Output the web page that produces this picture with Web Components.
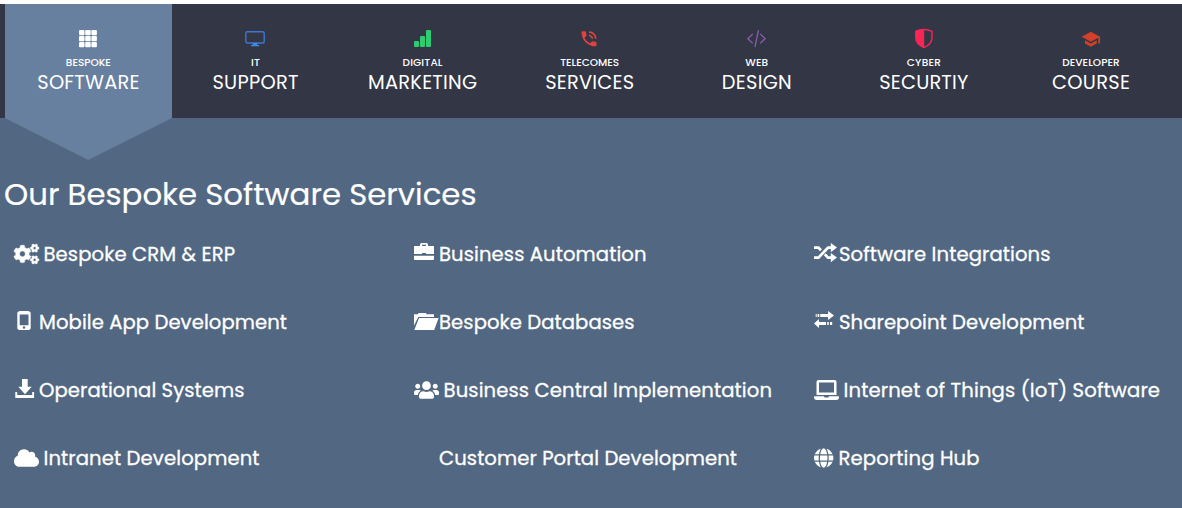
<!DOCTYPE html>
<html lang="en"><head><meta charset="utf-8"><title>Bespoke Software Services</title>
<style>
html,body{margin:0;height:100%;overflow:hidden;background:#fff}
body{font-family:Poppins,Inter,"Open Sans",sans-serif;color:#fff}
</style></head><body>
<services-page></services-page>
<script>
const FA = (d, vw = 640) => `<svg width="${vw / 25.6}" height="20" viewBox="0 0 ${vw} 512">${d}</svg>`;
const PX = d => `<svg width="25" height="20" viewBox="0 0 25 20">${d}</svg>`;
const NV = (d, v = '0 0 20 20') => `<svg width="20" height="20" viewBox="${v}">${d}</svg>`;
const smallCog = '<path d="M512.1 191l-8.2 14.3c-3 5.3-9.4 7.5-15.1 5.4-11.8-4.4-22.6-10.7-32.1-18.6-4.6-3.8-5.8-10.5-2.8-15.7l8.2-14.3c-6.9-8-12.3-17.3-15.9-27.4h-16.5c-6 0-11.2-4.3-12.2-10.3-2-12-2.1-24.6 0-37.1 1-6 6.2-10.4 12.2-10.4h16.5c3.6-10.1 9-19.4 15.9-27.4l-8.2-14.3c-3-5.2-1.9-11.9 2.8-15.7 9.5-7.9 20.4-14.2 32.1-18.6 5.7-2.1 12.1.1 15.1 5.4l8.2 14.3c10.5-1.9 21.2-1.9 31.7 0L552 6.3c3-5.3 9.4-7.5 15.1-5.4 11.8 4.4 22.6 10.7 32.1 18.6 4.6 3.8 5.8 10.5 2.8 15.7l-8.2 14.3c6.9 8 12.3 17.3 15.9 27.4h16.5c6 0 11.2 4.3 12.2 10.3 2 12 2.1 24.6 0 37.1-1 6-6.2 10.4-12.2 10.4h-16.5c-3.6 10.1-9 19.4-15.9 27.4l8.2 14.3c3 5.2 1.9 11.9-2.8 15.7-9.5 7.9-20.4 14.2-32.1 18.6-5.7 2.1-12.1-.1-15.1-5.4l-8.2-14.3c-10.4 1.9-21.2 1.9-31.7 0zm-10.5-58.8c38.5 29.6 82.4-14.3 52.8-52.8-38.5-29.7-82.4 14.3-52.8 52.8z"/>';
const icons = {
  cogs: FA('<g stroke="#fff" stroke-width="10">' + smallCog + '<g transform="translate(0 300)">' + smallCog + '</g><path d="M386.3 286.1l33.7 16.8c10.1 5.8 14.5 18.1 10.5 29.1-8.9 24.2-26.4 46.4-42.6 65.8-7.4 8.9-20.2 11.1-30.3 5.3l-29.1-16.8c-16 13.7-34.6 24.6-54.9 31.7v33.6c0 11.6-8.3 21.6-19.7 23.6-24.6 4.2-50.4 4.4-75.9 0-11.5-2-20-11.9-20-23.6V418c-20.3-7.2-38.9-18-54.9-31.7L74 403c-10 5.8-22.9 3.6-30.3-5.3-16.2-19.4-33.3-41.6-42.2-65.7-4-10.9.4-23.2 10.5-29.1l33.3-16.8c-3.9-20.9-3.9-42.4 0-63.4L12 205.8c-10.1-5.8-14.6-18.1-10.5-29 8.9-24.2 26-46.4 42.2-65.8 7.4-8.9 20.2-11.1 30.3-5.3l29.1 16.8c16-13.7 34.6-24.6 54.9-31.7V57.1c0-11.5 8.2-21.5 19.6-23.5 24.6-4.2 50.5-4.4 76-.1 11.5 2 20 11.9 20 23.6v33.6c20.3 7.2 38.9 18 54.9 31.7l29.1-16.8c10-5.8 22.9-3.6 30.3 5.3 16.2 19.4 33.2 41.6 42.1 65.8 4 10.9.1 23.2-10 29.1l-33.7 16.8c3.9 21 3.9 42.5 0 63.5zm-117.6 21.1c59.2-77-28.7-164.9-105.7-105.7-59.2 77 28.7 164.9 105.7 105.7z"/></g>'),
  briefcase: PX('<path fill-rule="evenodd" d="M0 2.7Q0 2 .7 2H6V.2L7.2-1h5.6L14 .2V2h5.3q.7 0 .7.7V10h-8V9H8v1H0zM8 .7V2h4V.7zM0 11.8h20v3.5q0 .7-.7.7H.7q-.7 0-.7-.7z"/>'),
  shuffle: PX('<path d="M16.8-1L23 3.6 16.8 8.300zM16.800 9L23 13.600 16.800 18.200z"/><path fill="none" stroke="#fff" stroke-width="2.700" d="M0 3.700H4.500L7 6.200M0 13.600H4.500L14 3.700H18M10.800 10.200L14 13.600H18"/>'),
  phone: PX('<path fill-rule="evenodd" d="M5.300-1h9.400l2 1.500v16l-1.500 1.500H4.800L3.300 16.500V.5zM5.700 2.600V13.200h8.800V2.600z"/><circle cx="10" cy="15.500" r="1.200" fill="#526781"/>'),
  folder: PX('<path d="M0 2.300h4L4.500 1H12l.5 1.300H20v2.600H4.300L0 13.500zM5 6H24.600L20.200 18H.3z"/>'),
  transfer: PX('<path d="M1.700 2.100h1v2.800h-1zM3.600 2.100h1.600v2.800H3.600zM6.200 2.100h7.900V-1L20 3.400 14.100 8V4.900H6.200zM0 11.400L5 7v3h7v2.900H5v3.200zM13.200 10h1.600v2.900h-1.600zM16 10h2.200v2.900H16z"/>'),
  download: PX('<path d="M8-1h5.700v7.700h4L11 14.200 4.300 6.700H8zM1.300 12h1.900v3h15v-3h1.900v6H1.300z"/>'),
  users: FA('<path d="M96 224c35.300 0 64-28.700 64-64s-28.700-64-64-64-64 28.700-64 64 28.700 64 64 64zm448 0c35.300 0 64-28.700 64-64s-28.700-64-64-64-64 28.700-64 64 28.700 64 64 64zm32 32h-64c-17.600 0-33.500 7.100-45.100 18.600 40.300 22.100 68.900 62 75.100 109.400h66c17.700 0 32-14.300 32-32v-32c0-35.300-28.700-64-64-64zm-256 0c61.900 0 112-50.100 112-112S381.900 32 320 32 208 82.100 208 144s50.100 112 112 112zm76.800 32h-8.300c-20.800 10-43.900 16-68.500 16s-47.600-6-68.500-16h-8.300C179.600 288 128 339.600 128 403.200V432c0 26.500 21.500 48 48 48h288c26.500 0 48-21.500 48-48v-28.800c0-63.600-51.600-115.200-115.200-115.200zm-223.700-13.400C161.500 263.100 145.600 256 128 256H64c-35.300 0-64 28.700-64 64v32c0 17.700 14.300 32 32 32h65.900c6.300-47.400 34.900-87.300 75.200-109.400z"/>'),
  laptop: FA('<path fill-rule="evenodd" d="M624 416H381.540c-.74 19.810-14.710 32-32.740 32H288c-18.690 0-33.020-17.470-32.770-32H16c-8.800 0-16 7.200-16 16v16c0 35.200 28.800 64 64 64h512c35.200 0 64-28.800 64-64v-16c0-8.800-7.200-16-16-16zM576 48c0-26.400-21.600-48-48-48H112C85.600 0 64 21.600 64 48v336h512V48zm-64 272H128V64h384v256z"/>'),
  cloud: FA('<path d="M537.600 226.600c4.100-10.700 6.400-22.400 6.400-34.600 0-53-43-96-96-96-19.700 0-38.100 6-53.300 16.200C367 64.200 315.300 32 256 32c-88.400 0-160 71.600-160 160 0 2.700.1 5.400.2 8.100C40.200 219.800 0 273.200 0 336c0 79.500 64.500 144 144 144h368c70.700 0 128-57.300 128-128 0-61.900-44-113.600-102.400-125.400z"/>'),
  globe: FA('<path d="M336.500 160C322 70.700 287.800 8 248 8s-74 62.700-88.500 152h177zM152 256c0 22.200 1.200 43.500 3.300 64h185.300c2.100-20.500 3.300-41.800 3.300-64s-1.200-43.500-3.300-64H155.300c-2.100 20.500-3.300 41.800-3.300 64zm324.700-96c-28.600-67.900-86.500-120.400-158-141.600 24.400 33.800 41.200 84.700 50 141.600h108zM177.200 18.400C105.800 39.600 47.800 92.100 19.300 160h108c8.700-56.900 25.500-107.800 49.900-141.600zM487.400 192H372.700c2.100 21 3.300 42.500 3.300 64s-1.200 43-3.300 64h114.600c5.500-20.500 8.600-41.800 8.600-64s-3.100-43.500-8.500-64zM120 256c0-21.500 1.200-43 3.300-64H8.600C3.200 212.500 0 233.800 0 256s3.200 43.500 8.600 64h114.600c-2-21-3.200-42.500-3.200-64zm39.500 96c14.500 89.300 48.700 152 88.500 152s74-62.700 88.500-152h-177zm159.300 141.600c71.400-21.200 129.400-73.700 158-141.600h-108c-8.800 56.900-25.600 107.800-50 141.600zM19.300 352c28.600 67.900 86.500 120.400 158 141.600-24.400-33.800-41.200-84.700-50-141.600h-108z"/>', 496),
  none: '',
  grid: NV([0, 1, 2].map(r => [0, 1, 2].map(c => `<rect x="${1 + c * 6.2}" y="${2 + r * 6}" width="5.500" height="5.200" rx=".9" fill="#fff"/>`).join('')).join('')),
  monitor: NV('<rect x=".8" y="3.700" width="18.400" height="11.300" rx="1.500" fill="none" stroke="#3c78d2" stroke-width="1.400"/><path fill="#4488e0" d="M7.700 15h4.600v2h1.800v1.300H5.900V17h1.800z"/>'),
  bars: NV('<g fill="#2ecc71"><rect x="2" y="13" width="5" height="6" rx="1"/><rect x="8" y="8" width="5" height="11" rx="1"/><rect x="14" y="2" width="5" height="17" rx="1"/></g>'),
  call: NV('<path fill="#e0433f" d="M20 15.500c-1.250 0-2.450-.2-3.570-.57-.35-.11-.74-.03-1.020.24l-2.200 2.200c-2.830-1.440-5.150-3.750-6.590-6.590l2.200-2.210c.28-.26.36-.65.25-1C8.700 6.450 8.500 5.250 8.500 4c0-.55-.45-1-1-1H4c-.55 0-1 .45-1 1 0 9.390 7.610 17 17 17 .55 0 1-.45 1-1v-3.500c0-.55-.45-1-1-1zM19 12h2c0-4.970-4.030-9-9-9v2c3.870 0 7 3.130 7 7zm-4 0h2c0-2.760-2.240-5-5-5v2c1.660 0 3 1.340 3 3z"/>', '0 -1 24 24'),
  code: NV('<path fill="none" stroke="#8a5fb0" stroke-width="1.300" d="M6.800 5.900L1.900 10.700l4.900 4.700M14.200 5.900l4.900 4.800-4.900 4.700M12.500 2.200L8.900 19.200"/>'),
  shield: NV('<g transform="translate(.7)"><path fill="none" stroke="#fb2457" stroke-width="1.400" d="M10.200 1.500C13 1.500 16 2.200 18.300 3.300V9.700C18.300 13.700 15.500 17.200 10.200 19.600 5 17.200 2.100 13.700 2.100 9.700V3.300C4.500 2.200 7.500 1.500 10.200 1.500z"/><path fill="#fb2457" d="M10.500 1.200C7.500 1.200 4.500 1.900 2 2.900V9.700c0 4 3 8 8.500 10z"/></g>'),
  cap: NV('<path fill="#d2402a" d="M5 13.180v4L12 21l7-3.820v-4L12 17l-7-3.820zM12 3L1 9l11 6 9-4.910V17h2V9L12 3z"/>', '-1 -1.500 24 24')
};
/* A single line of text tracked out or in so that its glyphs span the "span" width. */
customElements.define('fit-text', class extends HTMLElement {
  constructor() {
    super();
    this.attachShadow({mode: 'open'}).innerHTML = '<style>:host{display:block;white-space:nowrap}span{display:inline-block}</style><span><slot></slot></span>';
  }
  connectedCallback() {
    const s = this.shadowRoot.querySelector('span'), w = +this.getAttribute('span');
    this.style.width = w + 'px';
    const n = this.textContent.length;
    s.style.letterSpacing = (w - s.getBoundingClientRect().width) / (n - 1) + 'px';
  }
});
customElements.define('glyph-icon', class extends HTMLElement {
  connectedCallback() {
    this.attachShadow({mode: 'open'}).innerHTML = '<style>:host{display:block;height:20px;line-height:0}svg{display:block;overflow:visible;fill:#fff}</style>' + icons[this.getAttribute('name')];
  }
});
customElements.define('nav-tab', class extends HTMLElement {
  connectedCallback() {
    const a = n => this.getAttribute(n);
    this.attachShadow({mode: 'open'}).innerHTML = `<style>
:host{display:flex;flex-direction:column;align-items:center;box-sizing:border-box;height:114px;padding:24px 0 0;position:relative}
:host([active]){background:#67809f}
:host([active])::after{content:"";position:absolute;left:0;top:114px;width:100%;height:42px;background:#67809f;clip-path:polygon(0 0,100% 0,50% 100%)}
glyph-icon{margin-right:1px}
.small{font-size:10.500px;font-weight:500;line-height:14px;margin-top:8px}
.big{font-size:19.400px;line-height:24px;margin-top:1px}
</style><glyph-icon name="${a('icon')}"></glyph-icon><fit-text class="small" span="${a('sw')}">${a('small')}</fit-text><fit-text class="big" span="${a('bw')}">${a('big')}</fit-text>`;
  }
});
customElements.define('service-link', class extends HTMLElement {
  connectedCallback() {
    const a = n => this.getAttribute(n);
    this.attachShadow({mode: 'open'}).innerHTML = `<style>
:host{display:grid;grid-template-columns:${a('lead')}px auto;height:68px;align-items:start}
.label{font-size:19.600px;line-height:24px;-webkit-text-stroke:.3px #fff;margin-top:-2px}
</style><glyph-icon name="${a('icon')}"></glyph-icon><div class="label"></div>`;
    const f = document.createElement('fit-text');
    f.setAttribute('span', a('w'));
    f.textContent = a('label');
    this.shadowRoot.querySelector('.label').append(f);
  }
});
const tabs = [['grid', 'BESPOKE', 45, 'SOFTWARE', 102], ['monitor', 'IT', 9, 'SUPPORT', 86], ['bars', 'DIGITAL', 40, 'MARKETING', 109], ['call', 'TELECOMES', 59, 'SERVICES', 89], ['code', 'WEB', 23, 'DESIGN', 70], ['shield', 'CYBER', 34, 'SECURTIY', 89], ['cap', 'DEVELOPER', 57.500, 'COURSE', 78]];
const links = [
  ['cogs', 'Bespoke CRM &amp; ERP', 29.500, 191.500], ['briefcase', 'Business Automation', 25, 207.500], ['shuffle', 'Software Integrations', 25, 211.500],
  ['phone', 'Mobile App Development', 25, 248], ['folder', 'Bespoke Databases', 25, 195.500], ['transfer', 'Sharepoint Development', 25, 245.500],
  ['download', 'Operational Systems', 25, 205.500], ['users', 'Business Central Implementation', 29.500, 328.500], ['laptop', 'Internet of Things (IoT) Software', 29.500, 316.500],
  ['cloud', 'Intranet Development', 29.500, 216], ['none', 'Customer Portal Development', 25, 298], ['globe', 'Reporting Hub', 24.500, 141]];
customElements.define('services-page', class extends HTMLElement {
  connectedCallback() {
    this.attachShadow({mode: 'open'}).innerHTML = `<style>
:host{display:flex;flex-direction:column;height:508px;width:1182px;box-sizing:border-box;padding-top:4px}
nav{display:grid;grid-template-columns:repeat(7,167.100px);padding-left:4.800px;background:#333645;height:114px}
main{flex:1;background:#526781;padding:59px 0 0 4px}
.title{font-size:30.800px;line-height:36px;height:36px;-webkit-text-stroke:.2px #fff}
section{display:grid;grid-template-columns:repeat(3,400px);padding:31px 0 0 10px}
</style><nav>${tabs.map((t, i) => `<nav-tab ${i ? '' : 'active'} icon="${t[0]}" small="${t[1]}" sw="${t[2]}" big="${t[3]}" bw="${t[4]}"></nav-tab>`).join('')}</nav>
<main><fit-text class="title" span="472.500">Our Bespoke Software Services</fit-text>
<section>${links.map(l => `<service-link icon="${l[0]}" label="${l[1]}" lead="${l[2]}" w="${l[3]}"></service-link>`).join('')}</section></main>`;
  }
});
</script></body></html>
